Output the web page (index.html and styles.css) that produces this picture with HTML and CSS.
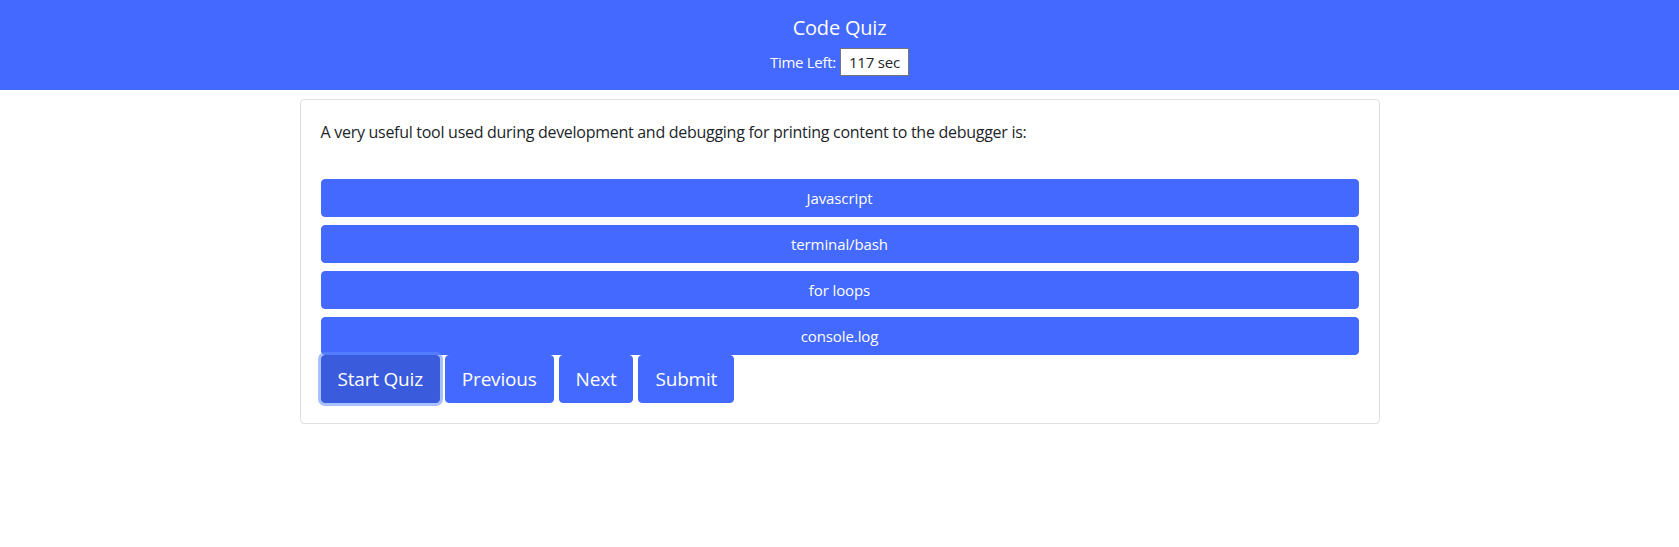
FILE: index.html
```html
<!DOCTYPE html>
<html lang="en">
<head>
<meta charset="utf-8">
<title>Code Quiz</title>
<link rel="stylesheet" href="styles.css">
</head>
<body>
<header class="topbar">
  <div class="title">Code Quiz</div>
  <div class="timer">
    <span class="timer-label">Time Left:</span>
    <span class="timer-box">117 sec</span>
  </div>
</header>
<main class="card">
  <p class="question">A very useful tool used during development and debugging for printing content to the debugger is:</p>
  <div class="answers">
    <button class="answer">Javascript</button>
    <button class="answer">terminal/bash</button>
    <button class="answer">for loops</button>
    <button class="answer">console.log</button>
  </div>
  <div class="controls">
    <button class="ctrl ctrl-active">Start Quiz</button>
    <button class="ctrl">Previous</button>
    <button class="ctrl">Next</button>
    <button class="ctrl">Submit</button>
  </div>
</main>
</body>
</html>
```
FILE: styles.css
```css
* { box-sizing: border-box; }
body {
  margin: 0;
  font-family: "Open Sans", "Noto Sans", sans-serif;
  font-size: 16px;
  color: #212529;
  background: #fff;
}
.topbar {
  background: #4469ff;
  color: #fff;
  text-align: center;
  padding: 13px 0 14px;
  height: 90px;
}
.title {
  font-size: 20px;
  line-height: 30px;
  letter-spacing: -0.2px;
}
.timer {
  margin-top: 5px;
  display: flex;
  justify-content: center;
  align-items: center;
  gap: 4px;
  height: 28px;
}
.timer-label {
  font-size: 15px;
  letter-spacing: -0.3px;
}
.timer-box {
  background: #fff;
  color: #212529;
  border: 1px solid #767676;
  height: 28px;
  line-height: 26px;
  padding: 0 8px;
  font-size: 15px;
  letter-spacing: -0.2px;
}
.card {
  width: 1080px;
  margin: 9px auto 0;
  border: 1px solid rgba(0,0,0,0.125);
  border-radius: 4px;
  padding: 20px;
}
.question {
  margin: 0 0 35px;
  line-height: 24px;
  font-size: 16px;
  letter-spacing: -0.28px;
}
.answers {
  display: flex;
  flex-direction: column;
  gap: 8px;
}
.answer {
  font-family: inherit;
  display: block;
  width: 100%;
  height: 38px;
  border: 1px solid #4469ff;
  background: #4469ff;
  color: #fff;
  border-radius: 4px;
  font-size: 15px;
  letter-spacing: -0.1px;
  line-height: 24px;
  padding: 6px 12px;
  cursor: pointer;
}
.controls {
  display: flex;
  gap: 5px;
}
.ctrl {
  font-family: inherit;
  height: 48px;
  border: 1px solid #4469ff;
  background: #4469ff;
  color: #fff;
  border-radius: 4px;
  font-size: 19px;
  letter-spacing: -0.2px;
  line-height: 30px;
  padding: 8px 16px;
  cursor: pointer;
}
.ctrl-active {
  background: #3a5bdb;
  border-color: #3a5bdb;
  box-shadow: 0 0 0 3px rgba(96, 140, 255, 0.55);
}
```
